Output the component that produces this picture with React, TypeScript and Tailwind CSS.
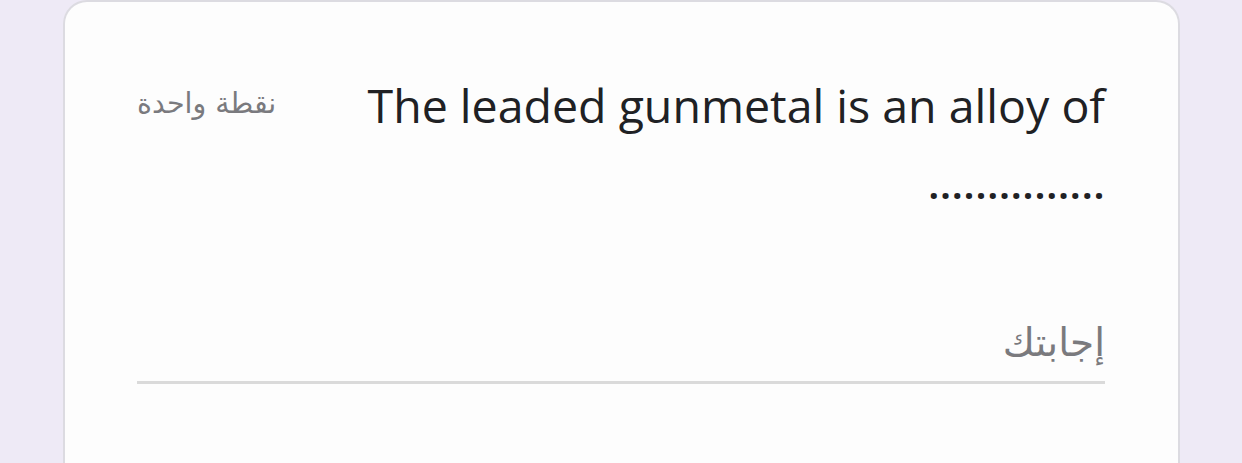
import React from "react";

export default function App() {
  return (
    <div className="w-[1242px] h-[463px] overflow-hidden bg-[#eeeaf6] pl-[63px] pr-[62px]">
      <div
        dir="rtl"
        className="h-[500px] rounded-t-[24px] border-2 border-b-0 border-[#dcdbe1] bg-[#fdfdfd] pl-[72px] pr-[73px] pt-[68px]"
      >
        <div className="flex items-start justify-between">
          <div
            dir="ltr"
            className="text-right text-[#202124] text-[46.5px] leading-[76px] font-['Open_Sans',sans-serif] -mt-[3px]"
          >
            The leaded gunmetal is an alloy of
            <br />
            <span className="text-[42px] font-semibold tracking-[0.3px]">...............</span>
          </div>
          <div className="pt-[14px] text-[28.5px] leading-[40px] text-[#7a7a7e] font-['DejaVu_Sans',sans-serif]">
            نقطة واحدة
          </div>
        </div>
        <div className="mt-[101px] text-[39px] leading-[42px] text-[#7a7a7e] font-['DejaVu_Sans',sans-serif]">
          إجابتك
        </div>
        <div className="mt-[17px] h-[3px] bg-[#dadada]" />
      </div>
    </div>
  );
}
